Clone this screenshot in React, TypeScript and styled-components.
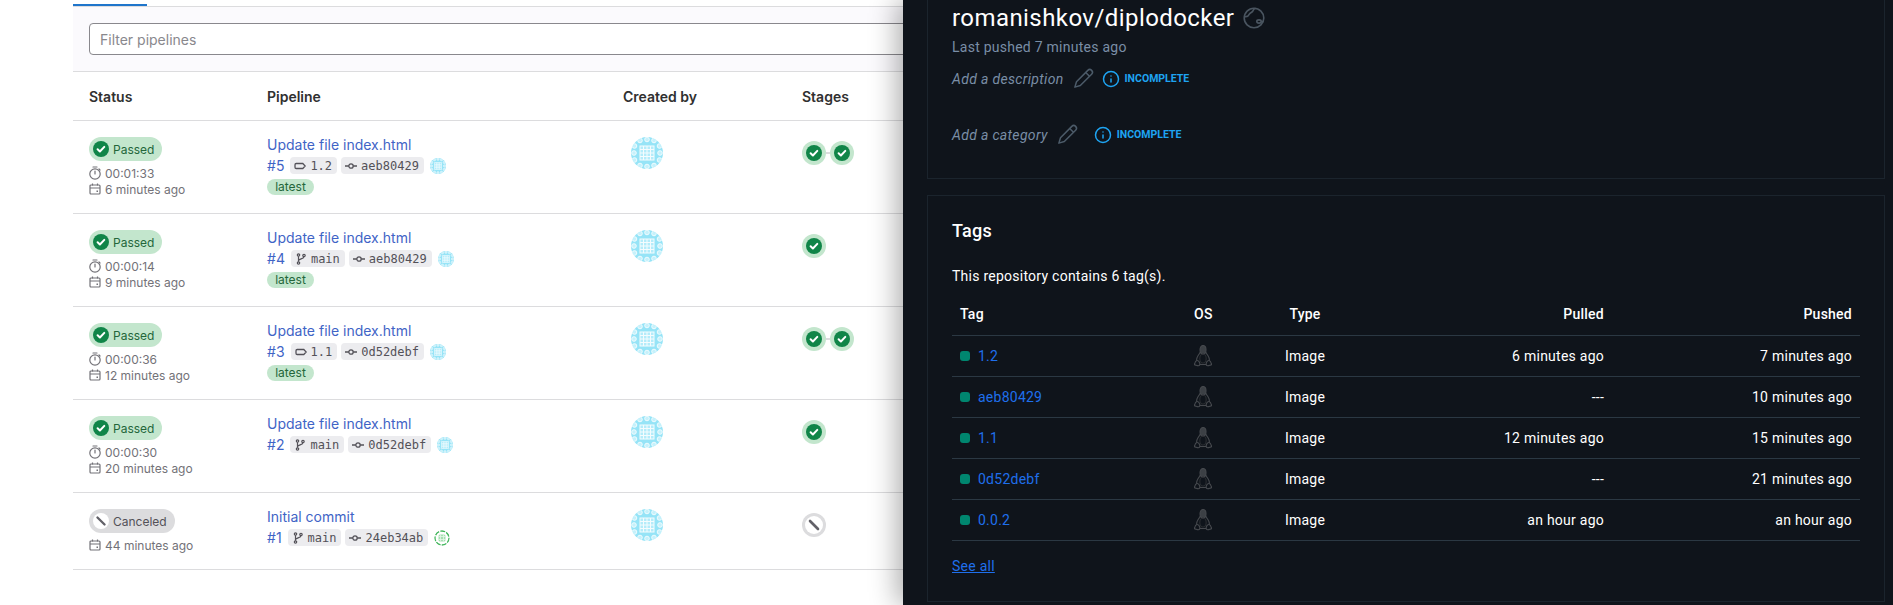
import React from "react";
import styled, { createGlobalStyle } from "styled-components";
import { Info } from "lucide-react";

const GlobalStyle = createGlobalStyle`
  html, body {
    margin: 0;
    padding: 0;
    height: 605px;
    overflow: hidden;
    background: #fff;
  }
`;

const Page = styled.div`
  display: flex;
  width: 1893px;
  height: 605px;
  overflow: hidden;
`;

/* ---------- pipelines side ---------- */

const Pipelines = styled.main`
  width: 903px;
  flex: none;
  box-sizing: border-box;
  padding-left: 73px;
  overflow: hidden;
  font-family: Inter, "Noto Sans", sans-serif;
  color: #303030;
`;

const TabStrip = styled.div`
  height: 6px;
  border-bottom: 1px solid #dcdcde;
  display: flex;
  align-items: flex-end;
`;

const ActiveTab = styled.div`
  width: 74px;
  height: 2px;
  background: #1f75cb;
`;

const FilterBar = styled.div`
  height: 65px;
  box-sizing: border-box;
  padding: 16px 0 0 16px;
  background: #fbfafd;
  border-bottom: 1px solid #dcdcde;
`;

const FilterInput = styled.input`
  display: block;
  width: 900px;
  height: 32px;
  box-sizing: border-box;
  padding: 0 10px;
  border: 1px solid #89888d;
  border-radius: 4px;
  background: #fff;
  font-family: inherit;
  font-size: 14px;
  &::placeholder {
    color: #89888d;
    opacity: 1;
  }
`;

const PipeGrid = styled.div`
  display: grid;
  grid-template-columns: 178px 356px 179px 1fr;
  padding-left: 16px;
  border-bottom: 1px solid #dcdcde;
`;

const HeadRow = styled(PipeGrid)`
  height: 49px;
  box-sizing: border-box;
  align-items: center;
  font-size: 14px;
  font-weight: 600;
`;

const PipeRow = styled(PipeGrid)`
  padding-top: 16px;
  padding-bottom: 16px;
`;

const Badge = styled.div<{ $canceled?: boolean }>`
  display: flex;
  width: fit-content;
  align-items: center;
  gap: 4px;
  height: 24px;
  box-sizing: border-box;
  padding: 0 8px 0 4px;
  border-radius: 12px;
  font-size: 12px;
  background: ${(p) => (p.$canceled ? "#dcdcde" : "#c3e6cd")};
  color: ${(p) => (p.$canceled ? "#535158" : "#24663b")};
`;

const MetaList = styled.div`
  margin-top: 4px;
`;

const MetaLine = styled.div`
  display: flex;
  align-items: center;
  gap: 4px;
  height: 16px;
  font-size: 12px;
  color: #737278;
`;

const PipeTitle = styled.a`
  display: block;
  font-size: 14px;
  line-height: 16px;
  color: #3f64c6;
`;

const RefLine = styled.div`
  display: flex;
  align-items: center;
  height: 17px;
  margin-top: 4px;
`;

const PipeId = styled.a`
  font-size: 14px;
  color: #3f64c6;
  margin-right: 6px;
`;

const RefPill = styled.span`
  display: inline-flex;
  align-items: center;
  gap: 4px;
  height: 17px;
  padding: 0 5px 0 4px;
  margin-right: 4px;
  border-radius: 4px;
  background: #ececef;
  color: #535158;
  font-family: "DejaVu Sans Mono", "Liberation Mono", monospace;
  font-size: 12px;
`;

const MiniAvatar = styled.span`
  display: inline-flex;
  margin-left: 2px;
`;

const LatestPill = styled.span`
  display: block;
  width: 47px;
  height: 16px;
  margin-top: 5px;
  border-radius: 8px;
  background: #c3e6cd;
  color: #24663b;
  font-size: 12px;
  line-height: 16px;
  text-align: center;
`;

const AvatarCell = styled.div`
  padding-left: 8px;
`;

const StageCell = styled.div`
  display: flex;
  align-items: flex-start;
  padding-top: 4px;
`;

const StageRing = styled.span<{ $canceled?: boolean }>`
  display: flex;
  align-items: center;
  justify-content: center;
  width: 24px;
  height: 24px;
  border-radius: 50%;
  background: ${(p) => (p.$canceled ? "#dcdcde" : "#c3e6cd")};
`;

const StageLink = styled.span`
  width: 4px;
  height: 2px;
  margin-top: 11px;
  background: #dcdcde;
`;

const AvatarSvg = styled.svg`
  display: block;
  border-radius: 50%;
  flex: none;
`;

/* ---------- docker side ---------- */

const Drawer = styled.aside`
  flex: 1;
  position: relative;
  z-index: 1;
  box-sizing: border-box;
  padding: 0 8px 0 24px;
  background: #0f141b;
  box-shadow: -6px 0 26px rgba(0, 0, 0, 0.32);
  font-family: Roboto, "Liberation Sans", sans-serif;
  letter-spacing: 0.25px;
  color: #fff;
`;

const Card = styled.section`
  box-sizing: border-box;
  border: 1px solid #1b242d;
`;

const RepoCard = styled(Card)`
  height: 179px;
  border-top: none;
  padding: 2px 24px 0;
  margin-bottom: 16px;
`;

const TagsCard = styled(Card)`
  height: 407px;
  padding: 24px 24px 0;
`;

const RepoTitle = styled.h1`
  display: flex;
  align-items: center;
  gap: 9px;
  height: 32px;
  margin: 0;
  font-size: 24px;
  font-weight: 400;
  letter-spacing: 0.43px;
`;

const Pushed = styled.div`
  margin-top: 3px;
  font-size: 14px;
  line-height: 20px;
  color: #7a8ea6;
`;

const EditRow = styled.div<{ $top: number; $gap: number }>`
  display: flex;
  align-items: center;
  height: 20px;
  margin-top: ${(p) => p.$top}px;
  gap: 10px;
  svg.info {
    margin-left: ${(p) => p.$gap}px;
    color: #1ea4f2;
  }
`;

const EditText = styled.span`
  font-size: 14px;
  font-style: italic;
  letter-spacing: 0.33px;
  color: #7a8ea6;
`;

const Incomplete = styled.span`
  margin: -2px 0 0 -5px;
  font-size: 10.5px;
  font-weight: 700;
  letter-spacing: 0;
  color: #1ea4f2;
`;

const TagsTitle = styled.h2`
  margin: 0;
  font-size: 18px;
  font-weight: 500;
  line-height: 22px;
`;

const TagsCount = styled.p`
  margin: 24px 0 0;
  font-size: 14px;
  line-height: 20px;
`;

const TagGrid = styled.div`
  display: grid;
  grid-template-columns: 234px 76px 86px 264px 1fr;
  align-items: center;
  box-sizing: border-box;
  padding-bottom: 1px;
  border-bottom: 1px solid #2b3843;
  font-size: 14px;
`;

const TagHead = styled(TagGrid)`
  height: 43px;
  margin-top: 7px;
  font-weight: 500;
`;

const TagRow = styled(TagGrid)`
  height: 41px;
`;

const TagCell = styled.div<{ $align?: string }>`
  padding: 0 8px;
  text-align: ${(p) => p.$align || "left"};
`;

const TagName = styled.div`
  display: flex;
  align-items: center;
  gap: 8px;
  padding-left: 8px;
`;

const TagDot = styled.span`
  width: 10px;
  height: 10px;
  border-radius: 3px;
  background: #00866f;
`;

const TagLink = styled.a`
  color: #1f6fec;
`;

const SeeAll = styled.a`
  display: block;
  margin-top: 15px;
  font-size: 14px;
  line-height: 20px;
  color: #1f6fec;
  text-decoration: underline;
`;

const PencilSvg = styled.svg`
  overflow: visible;
  flex: none;
`;

const TuxSvg = styled.svg`
  display: block;
`;

/* ---------- drawings ---------- */

const CheckCircle = () => (
  <svg width="16" height="16" viewBox="0 0 16 16">
    <circle cx="8" cy="8" r="8" fill="#108548" />
    <path d="M4.6 8.3l2.3 2.2 4.4-4.6" fill="none" stroke="#fff" strokeWidth="2" strokeLinecap="round" strokeLinejoin="round" />
  </svg>
);

const CancelCircle = ({ size }: { size: number }) => (
  <svg width={size} height={size} viewBox="0 0 18 18">
    <circle cx="9" cy="9" r="9" fill="#fff" />
    <path d="M5 5l8 8" stroke="#626168" strokeWidth="2.6" strokeLinecap="round" />
  </svg>
);

const TimerIcon = () => (
  <svg width="12" height="14" viewBox="0 0 12 14" fill="none" stroke="#737278" strokeWidth="1.2">
    <circle cx="6" cy="8" r="5.2" />
    <path d="M4 1h4M6 8V5M10 3l1 1" strokeLinecap="round" />
  </svg>
);

const CalendarIcon = () => (
  <svg width="12" height="12" viewBox="0 0 12 12" fill="none" stroke="#737278" strokeWidth="1.2">
    <rect x="1" y="2" width="10" height="9" rx="1" />
    <path d="M1 5h10M3.5 0.5v2M8.5 0.5v2" />
    <rect x="7.5" y="7.5" width="1.5" height="1.5" fill="#737278" stroke="none" />
  </svg>
);

const TagIcon = () => (
  <svg width="12" height="12" viewBox="0 0 12 12" fill="none" stroke="#535158" strokeWidth="1.3">
    <path d="M2.2 3.5h6.6L11.2 6 8.8 8.5H2.2A1.2 1.2 0 0 1 1 7.3V4.7a1.2 1.2 0 0 1 1.2-1.2z" />
  </svg>
);

const BranchIcon = () => (
  <svg width="12" height="12" viewBox="0 0 12 12" fill="none" stroke="#535158" strokeWidth="1.2">
    <circle cx="3.5" cy="2" r="1.2" />
    <circle cx="9" cy="2.5" r="1.2" />
    <circle cx="3.5" cy="10" r="1.2" />
    <path d="M3.5 3.2v5.6M9 3.7c0 2.4-5.5 1.8-5.5 4" />
  </svg>
);

const CommitIcon = () => (
  <svg width="12" height="12" viewBox="0 0 12 12" fill="none" stroke="#535158" strokeWidth="1.3">
    <circle cx="6" cy="6" r="2.2" />
    <path d="M0 6h3.8M8.2 6H12" />
  </svg>
);

// identicon: rings of dots around a pale lattice
const ringSpots = [
  [3.5, 9], [9, 3.5], [16, 2.5], [23, 3.5], [28.5, 9],
  [3, 16], [29, 16],
  [3.5, 23], [9, 28.5], [16, 29.5], [23, 28.5], [28.5, 23],
];
const latticeCells = [9.5, 13, 16.5, 20];

const Avatar = ({ size }: { size: number }) => (
  <AvatarSvg width={size} height={size} viewBox="0 0 32 32">
    <rect width="32" height="32" fill="#96e4f7" />
    {ringSpots.map(([x, y]) => (
      <circle key={`${x}-${y}`} cx={x} cy={y} r="2.3" fill="#c6f1fb" stroke="#f0fbfe" strokeWidth="1" />
    ))}
    <rect x="8.5" y="8.5" width="15" height="15" fill="#f4fcfe" />
    {latticeCells.flatMap((x) =>
      latticeCells.map((y) => <rect key={`${x}:${y}`} x={x} y={y} width="2.5" height="2.5" fill="#b4ecfa" />)
    )}
  </AvatarSvg>
);

const GreenAvatar = () => (
  <AvatarSvg width="16" height="16" viewBox="0 0 16 16">
    <circle cx="8" cy="8" r="7" fill="#fff" stroke="#42b65c" strokeWidth="1.3" strokeDasharray="5 1.2" />
    <rect x="4.5" y="4.5" width="7" height="7" rx="1.5" fill="#a6dfb2" />
    <path d="M6.5 4.5v7M9.5 4.5v7M4.5 6.5h7M4.5 9.5h7" stroke="#e3f6e7" strokeWidth="0.8" />
  </AvatarSvg>
);

const GlobeIcon = () => (
  <svg width="22" height="22" viewBox="0 0 22 22" fill="none" stroke="#4a5560" strokeWidth="1.6">
    <circle cx="11" cy="11" r="9.8" />
    <path d="M1.6 9.5c2.4.6 3.6-.2 4.6-2.2C7.2 5.4 9.5 5.5 10 3.8 10.3 2.8 11 1.8 12.5 1.3" />
    <ellipse cx="16" cy="14.5" rx="2.2" ry="1.6" />
    <path d="M18.2 14.5c.8.2 1.3.2 2 0" />
  </svg>
);

const PencilIcon = () => (
  <PencilSvg width="18" height="18" viewBox="0 0 18 18" fill="none" stroke="#4c5b69" strokeWidth="1.5" strokeLinejoin="round">
    <g transform="rotate(45 9 9)">
      <path d="M6.3 -0.5a2.7 2.7 0 0 1 5.4 0V15.5L9 20.5 6.3 15.5z" />
      <path d="M6.3 2.5h5.4" />
    </g>
  </PencilSvg>
);

const TuxIcon = () => (
  <TuxSvg width="18" height="22" viewBox="0 0 18 22" fill="none" stroke="#46494e" strokeWidth="1.1" strokeLinejoin="round">
    <ellipse cx="9" cy="4.8" rx="3" ry="4.3" fill="#3c4045" />
    <path d="M11.8 7c.3 1.4 1.3 2.4 2.2 3.8 1 1.5 1.6 3.2 1.5 4.9M6.2 7c-.3 1.4-1.3 2.4-2.2 3.8-1 1.5-1.6 3.2-1.5 4.9" />
    <ellipse cx="9" cy="13.5" rx="3.2" ry="4.5" stroke="#2a2d31" />
    <path d="M6 19.5h6" />
    <path d="M2.5 15.7c1.2-.6 2.5.4 3.1 2 .5 1.4.2 3-1.3 3.1-1.1.1-2.2-.6-3.4-.9-.8-.2-.5-1 0-1.8.4-.7.2-1.9 1.6-2.4z" />
    <path d="M15.5 15.7c-1.2-.6-2.5.4-3.1 2-.5 1.4-.2 3 1.3 3.1 1.1.1 2.2-.6 3.4-.9.8-.2.5-1 0-1.8-.4-.7-.2-1.9-1.6-2.4z" />
  </TuxSvg>
);

/* ---------- data ---------- */

type Pipeline = {
  id: number;
  title: string;
  status: "Passed" | "Canceled";
  duration?: string;
  ago: string;
  ref: string;
  isTag: boolean;
  sha: string;
  latest: boolean;
  stages: number;
};

const pipelines: Pipeline[] = [
  { id: 5, title: "Update file index.html", status: "Passed", duration: "00:01:33", ago: "6 minutes ago", ref: "1.2", isTag: true, sha: "aeb80429", latest: true, stages: 2 },
  { id: 4, title: "Update file index.html", status: "Passed", duration: "00:00:14", ago: "9 minutes ago", ref: "main", isTag: false, sha: "aeb80429", latest: true, stages: 1 },
  { id: 3, title: "Update file index.html", status: "Passed", duration: "00:00:36", ago: "12 minutes ago", ref: "1.1", isTag: true, sha: "0d52debf", latest: true, stages: 2 },
  { id: 2, title: "Update file index.html", status: "Passed", duration: "00:00:30", ago: "20 minutes ago", ref: "main", isTag: false, sha: "0d52debf", latest: false, stages: 1 },
  { id: 1, title: "Initial commit", status: "Canceled", ago: "44 minutes ago", ref: "main", isTag: false, sha: "24eb34ab", latest: false, stages: 0 },
];

const tags = [
  { name: "1.2", pulled: "6 minutes ago", pushed: "7 minutes ago" },
  { name: "aeb80429", pulled: "---", pushed: "10 minutes ago" },
  { name: "1.1", pulled: "12 minutes ago", pushed: "15 minutes ago" },
  { name: "0d52debf", pulled: "---", pushed: "21 minutes ago" },
  { name: "0.0.2", pulled: "an hour ago", pushed: "an hour ago" },
];

function PipelineRow({ row }: { row: Pipeline }) {
  const canceled = row.status === "Canceled";
  return (
    <PipeRow>
      <div>
        <Badge $canceled={canceled}>
          {canceled ? <CancelCircle size={16} /> : <CheckCircle />}
          {row.status}
        </Badge>
        <MetaList>
          {row.duration && (
            <MetaLine>
              <TimerIcon />
              {row.duration}
            </MetaLine>
          )}
          <MetaLine>
            <CalendarIcon />
            {row.ago}
          </MetaLine>
        </MetaList>
      </div>
      <div>
        <PipeTitle>{row.title}</PipeTitle>
        <RefLine>
          <PipeId>#{row.id}</PipeId>
          <RefPill>
            {row.isTag ? <TagIcon /> : <BranchIcon />}
            {row.ref}
          </RefPill>
          <RefPill>
            <CommitIcon />
            {row.sha}
          </RefPill>
          <MiniAvatar>{canceled ? <GreenAvatar /> : <Avatar size={16} />}</MiniAvatar>
        </RefLine>
        {row.latest && <LatestPill>latest</LatestPill>}
      </div>
      <AvatarCell>
        <Avatar size={32} />
      </AvatarCell>
      <StageCell>
        {canceled ? (
          <StageRing $canceled>
            <CancelCircle size={18} />
          </StageRing>
        ) : (
          Array.from({ length: row.stages }).map((_, i) => (
            <React.Fragment key={i}>
              {i > 0 && <StageLink />}
              <StageRing>
                <CheckCircle />
              </StageRing>
            </React.Fragment>
          ))
        )}
      </StageCell>
    </PipeRow>
  );
}

export default function App() {
  return (
    <Page>
      <GlobalStyle />
      <Pipelines>
        <TabStrip>
          <ActiveTab />
        </TabStrip>
        <FilterBar>
          <FilterInput placeholder="Filter pipelines" />
        </FilterBar>
        <HeadRow>
          <div>Status</div>
          <div>Pipeline</div>
          <div>Created by</div>
          <div>Stages</div>
        </HeadRow>
        {pipelines.map((row) => (
          <PipelineRow key={row.id} row={row} />
        ))}
      </Pipelines>

      <Drawer>
        <RepoCard>
          <RepoTitle>
            romanishkov/diplodocker
            <GlobeIcon />
          </RepoTitle>
          <Pushed>Last pushed 7 minutes ago</Pushed>
          <EditRow $top={12} $gap={0}>
            <EditText>Add a description</EditText>
            <PencilIcon />
            <Info className="info" size={18} />
            <Incomplete>INCOMPLETE</Incomplete>
          </EditRow>
          <EditRow $top={36} $gap={8}>
            <EditText>Add a category</EditText>
            <PencilIcon />
            <Info className="info" size={18} />
            <Incomplete>INCOMPLETE</Incomplete>
          </EditRow>
        </RepoCard>

        <TagsCard>
          <TagsTitle>Tags</TagsTitle>
          <TagsCount>This repository contains 6 tag(s).</TagsCount>
          <TagHead>
            <TagCell>Tag</TagCell>
            <TagCell>OS</TagCell>
            <TagCell $align="center">Type</TagCell>
            <TagCell $align="right">Pulled</TagCell>
            <TagCell $align="right">Pushed</TagCell>
          </TagHead>
          {tags.map((tag) => (
            <TagRow key={tag.name}>
              <TagName>
                <TagDot />
                <TagLink>{tag.name}</TagLink>
              </TagName>
              <TagCell>
                <TuxIcon />
              </TagCell>
              <TagCell $align="center">Image</TagCell>
              <TagCell $align="right">{tag.pulled}</TagCell>
              <TagCell $align="right">{tag.pushed}</TagCell>
            </TagRow>
          ))}
          <SeeAll>See all</SeeAll>
        </TagsCard>
      </Drawer>
    </Page>
  );
}
